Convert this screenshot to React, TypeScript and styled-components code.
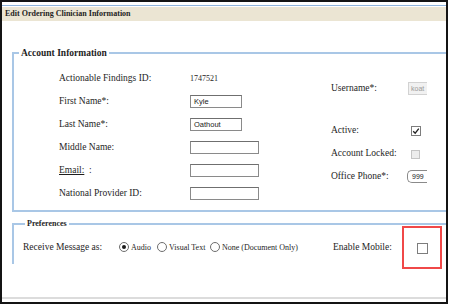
import styled, { createGlobalStyle } from "styled-components";

const Global = createGlobalStyle`
  html, body { margin: 0; padding: 0; background: #fff; }
  * { box-sizing: border-box; }
`;

const serif = `"Liberation Serif", "Times New Roman", serif`;
const sans = `"Liberation Sans", Arial, sans-serif`;

const Frame = styled.div`
  width: 448px;
  height: 304px;
  border: 2px solid #141414;
  display: flex;
  flex-direction: column;
  overflow: hidden;
  font-family: ${serif};
  color: #1e1e1e;
`;

const TopRule = styled.div`
  margin-top: 3px;
  height: 1px;
  background: #8fb4dc;
`;

const TitleBar = styled.div`
  margin-top: 1px;
  height: 14px;
  line-height: 14px;
  padding-left: 3px;
  background: #ebe5d3;
  font-family: ${serif};
  font-size: 8px;
  font-weight: bold;
`;

const Fieldset = styled.fieldset<{ $top: number; $bottomless?: boolean }>`
  margin: ${(p) => p.$top}px 0 0 10px;
  width: 470px;
  padding: 0;
  border: 2px solid #a9c7e6;
  ${(p) => (p.$bottomless ? "border-bottom: none;" : "")}
  min-width: 0;
  font-family: ${serif};
`;

const Legend = styled.legend<{ $size: number; $offset: number }>`
  margin-left: ${(p) => p.$offset}px;
  padding: 0 2px;
  font-family: ${serif};
  font-size: ${(p) => p.$size}px;
  line-height: ${(p) => Math.round(p.$size) + 2}px;
  font-weight: bold;
`;

const AccountBody = styled.div`
  display: flex;
  padding: 7.5px 0 5px 45px;
`;

const LeftGrid = styled.div`
  display: grid;
  grid-template-columns: 131px 141px;
  grid-auto-rows: 23px;
  align-items: center;
`;

const RightCol = styled.div`
  display: flex;
  flex-direction: column;
  padding-top: 10px;
`;

const SideRow = styled.div<{ $gap?: number }>`
  display: grid;
  grid-template-columns: 77px 40px;
  align-items: center;
  height: 23px;
  margin-top: ${(p) => p.$gap ?? 0}px;
`;

const Label = styled.span`
  font-family: ${serif};
  font-size: 9.5px;
  white-space: nowrap;
`;

const Value = styled.span`
  font-family: ${serif};
  font-size: 8px;
`;

const TextBox = styled.div<{ $w: number }>`
  width: ${(p) => p.$w}px;
  height: 13px;
  border: 1px solid #8a8a8a;
  border-top-color: #6f6f6f;
  background: #fff;
  font-family: ${sans};
  font-size: 7.5px;
  line-height: 11px;
  padding-left: 3px;
  color: #222;
`;

const SideBox = styled.div<{ $disabled?: boolean; $rounded?: boolean }>`
  width: ${(p) => (p.$rounded ? 20 : 19)}px;
  height: 13px;
  overflow: hidden;
  white-space: nowrap;
  border: 1px solid ${(p) => (p.$disabled ? "#d2d2d2" : "#8a8a8a")};
  border-right: none;
  border-radius: ${(p) => (p.$rounded ? "5px 0 0 5px" : "0")};
  background: ${(p) => (p.$disabled ? "#f1f1f1" : "#fff")};
  color: ${(p) => (p.$disabled ? "#9a9a9a" : "#222")};
  font-family: ${sans};
  font-size: 7px;
  line-height: 11px;
  padding-left: ${(p) => (p.$rounded ? 4 : 2)}px;
  margin-left: ${(p) => (p.$rounded ? -1 : 0)}px;
`;

const Box = styled.span<{ $disabled?: boolean; $size: number; $shift: number }>`
  position: relative;
  display: inline-block;
  width: ${(p) => p.$size}px;
  height: ${(p) => p.$size}px;
  margin-left: ${(p) => p.$shift}px;
  border: 1px solid ${(p) => (p.$disabled ? "#c4c4c4" : "#7d7d7d")};
  background: ${(p) => (p.$disabled ? "#ececec" : "#fff")};
  vertical-align: middle;
`;

const Annotation = styled.span`
  position: absolute;
  left: -16px;
  top: -18px;
  width: 40px;
  height: 43px;
  border: 2px solid #f04848;
`;

function CheckBox(props: { checked?: boolean; disabled?: boolean; size?: number; shift?: number; marked?: boolean }) {
  return (
    <Box $disabled={props.disabled} $size={props.size ?? 10} $shift={props.shift ?? 3}>
      {props.checked && (
        <svg width="8" height="8" viewBox="0 0 8 8" style={{ position: "absolute", left: 0, top: 0 }}>
          <path d="M1.2 4.2 L3.2 6.2 L6.8 1.6" fill="none" stroke="#222" strokeWidth="1.3" />
        </svg>
      )}
      {props.marked && <Annotation />}
    </Box>
  );
}

const PrefRow = styled.div`
  display: grid;
  grid-template-columns: 96px 214px 84px auto;
  align-items: center;
  height: 14px;
  margin: 9.5px 0 11.5px 9px;
`;

const Radios = styled.div`
  display: flex;
  align-items: center;
`;

const RadioOption = styled.span<{ $w?: number }>`
  display: inline-flex;
  align-items: center;
  gap: 2px;
  font-family: ${serif};
  font-size: 8px;
  white-space: nowrap;
  ${(p) => (p.$w ? `width: ${p.$w}px;` : "")}
`;

const Dot = styled.span<{ $on?: boolean }>`
  position: relative;
  flex: none;
  width: 10px;
  height: 10px;
  border-radius: 50%;
  border: 1px solid #6d6d6d;
  background: #fff;
  &::after {
    content: "";
    display: ${(p) => (p.$on ? "block" : "none")};
    position: absolute;
    left: 2px;
    top: 2px;
    width: 4px;
    height: 4px;
    border-radius: 50%;
    background: #1a1a1a;
  }
`;

const FooterRule = styled.div`
  margin-top: auto;
  margin-bottom: 3px;
  height: 2px;
  background: #dcdcdc;
`;

export default function App() {
  return (
    <>
      <Global />
      <Frame>
        <TopRule />
        <TitleBar>Edit Ordering Clinician Information</TitleBar>
        <Fieldset $top={26}>
          <Legend $size={9.5} $offset={5}>Account Information</Legend>
          <AccountBody>
            <LeftGrid>
              <Label>Actionable Findings ID:</Label>
              <Value>1747521</Value>
              <Label>First Name*:</Label>
              <TextBox $w={52}>Kyle</TextBox>
              <Label>Last Name*:</Label>
              <TextBox $w={52}>Oathout</TextBox>
              <Label>Middle Name:</Label>
              <TextBox $w={69} />
              <Label><u>Email:</u>&nbsp;&nbsp;:</Label>
              <TextBox $w={69} />
              <Label>National Provider ID:</Label>
              <TextBox $w={69} />
            </LeftGrid>
            <RightCol>
              <SideRow>
                <Label>Username*:</Label>
                <SideBox $disabled>koat</SideBox>
              </SideRow>
              <SideRow $gap={19}>
                <Label>Active:</Label>
                <span><CheckBox checked /></span>
              </SideRow>
              <SideRow>
                <Label>Account Locked:</Label>
                <span><CheckBox disabled size={9} /></span>
              </SideRow>
              <SideRow>
                <Label>Office Phone*:</Label>
                <SideBox $rounded>999</SideBox>
              </SideRow>
            </RightCol>
          </AccountBody>
        </Fieldset>
        <Fieldset $top={7} $bottomless>
          <Legend $size={8} $offset={11}>Preferences</Legend>
          <PrefRow>
            <Label>Receive Message as:</Label>
            <Radios>
              <RadioOption $w={38}><Dot $on />Audio</RadioOption>
              <RadioOption $w={53}><Dot />Visual Text</RadioOption>
              <RadioOption><Dot />None (Document Only)</RadioOption>
            </Radios>
            <Label>Enable Mobile:</Label>
            <span><CheckBox size={11} shift={0} marked /></span>
          </PrefRow>
        </Fieldset>
        <FooterRule />
      </Frame>
    </>
  );
}
